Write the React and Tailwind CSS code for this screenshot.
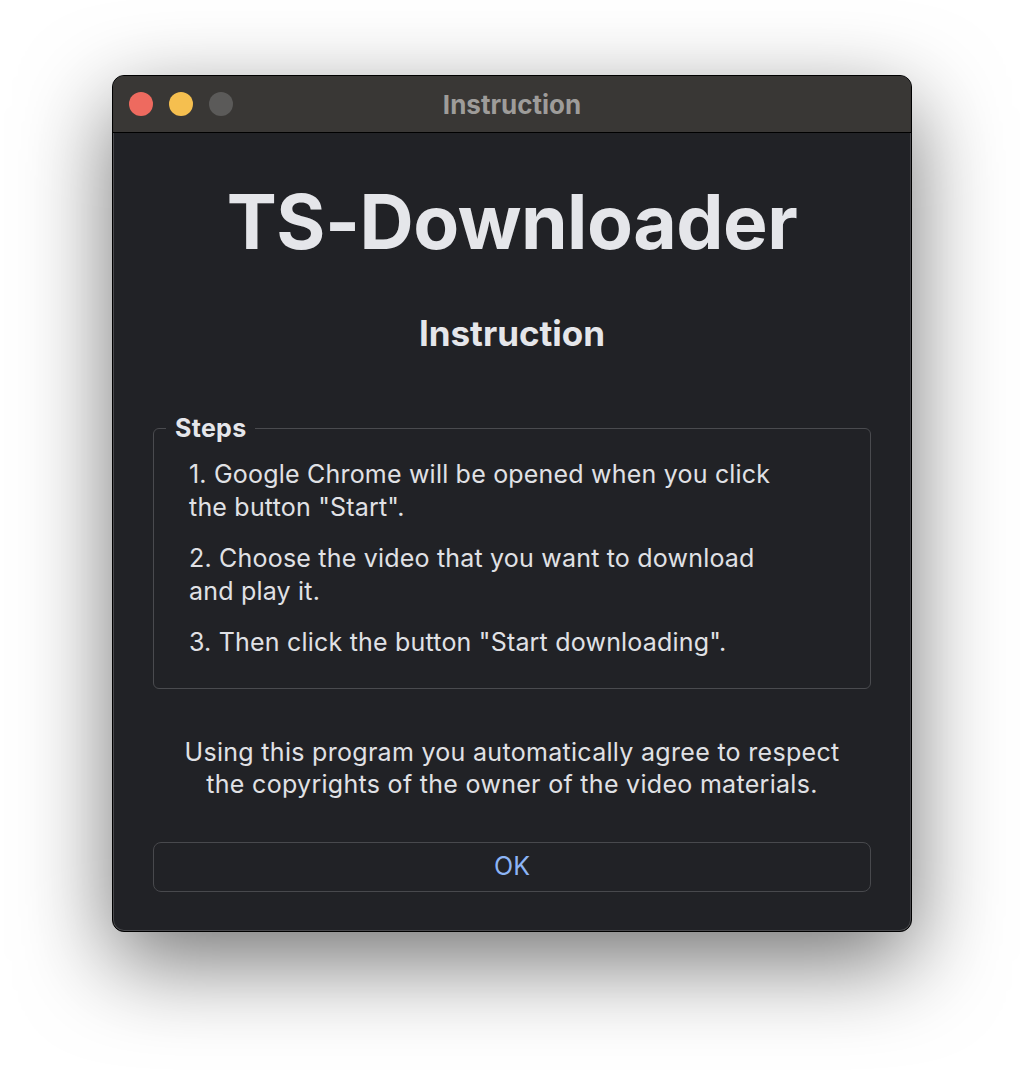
import React from 'react';

const FONT = { fontFamily: 'Inter, "Noto Sans", "Liberation Sans", sans-serif' };

const steps = [
  ['1. Google Chrome will be opened when you click', 'the button "Start".'],
  ['2. Choose the video that you want to download', 'and play it.'],
  ['3. Then click the button "Start downloading".'],
];

function TrafficLights() {
  return (
    <div className="flex items-center gap-4 pl-[16px]">
      <span className="w-6 h-6 rounded-full bg-[#ee6a5f]" />
      <span className="w-6 h-6 rounded-full bg-[#f5bf4f]" />
      <span className="w-6 h-6 rounded-full bg-[#5b5a59]" />
    </div>
  );
}

export default function App() {
  return (
    <div className="min-h-[1080px] bg-white pt-[75px] pl-[112px]" style={FONT}>
      <div className="w-[800px] h-[857px] rounded-[12px] border border-black bg-[#212226] overflow-hidden flex flex-col shadow-[0_30px_90px_rgba(0,0,0,0.55),inset_0_0_0_1px_rgba(255,255,255,0.18)]">
        {/* title bar */}
        <div className="relative h-[57px] shrink-0 bg-[#393735] border-b border-black flex items-center">
          <TrafficLights />
          <div className="absolute inset-0 flex items-center justify-center text-[26px] font-bold text-[#9e9c9a]">
            Instruction
          </div>
        </div>

        {/* content */}
        <div className="flex flex-col items-center px-[40px] text-[#e5e6ea]">
          <h1 className="mt-[52px] text-[75px] leading-[74px] font-bold tracking-[-0.5px]">TS-Downloader</h1>
          <h2 className="mt-[54px] text-[35px] leading-[40px] font-bold">Instruction</h2>

          <fieldset className="mt-[62px] w-full h-[274px] rounded-[6px] border border-[#4a4b4f] pl-[12px]">
            <legend className="px-[9px] text-[25px] leading-[26px] font-bold tracking-[0.3px]">Steps</legend>
            <div className="ml-[23px] mt-[17px] flex flex-col gap-[18px] text-[25px] leading-[33px] tracking-[0.2px] text-[#e0e1e5]">
              {steps.map((lines, i) => (
                <p key={i}>
                  {lines.map((l, j) => (
                    <span key={j} className="block">{l}</span>
                  ))}
                </p>
              ))}
            </div>
          </fieldset>

          <p className="mt-[47px] text-center text-[25px] leading-[32px] tracking-[0.3px] text-[#e0e1e5]">
            Using this program you automatically agree to respect
            <br />
            the copyrights of the owner of the video materials.
          </p>

          <button className="mt-[42px] w-full h-[50px] rounded-[8px] border border-[#48494d] text-[25px] text-[#8cb4f5]">
            OK
          </button>
        </div>
      </div>
    </div>
  );
}
